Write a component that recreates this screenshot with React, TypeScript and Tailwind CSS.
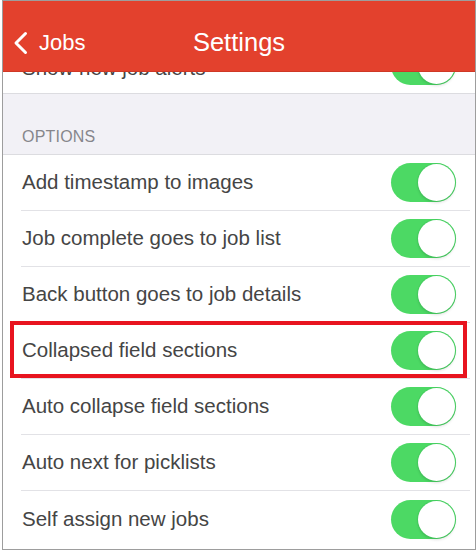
import React from 'react';

const options = [
  { label: 'Add timestamp to images' },
  { label: 'Job complete goes to job list' },
  { label: 'Back button goes to job details' },
  { label: 'Collapsed field sections', highlight: true },
  { label: 'Auto collapse field sections' },
  { label: 'Auto next for picklists' },
  { label: 'Self assign new jobs' },
];

const font = { fontFamily: '"Helvetica Neue", "Liberation Sans", Arial, sans-serif' };

function Toggle() {
  return (
    <div className="relative w-[65px] h-[39px] rounded-full bg-[#4cd964] shrink-0">
      <div className="absolute right-[1px] top-[1px] w-[37px] h-[37px] rounded-full bg-white shadow-[0_0_0_1px_rgba(60,190,90,0.35),0_2px_3px_rgba(0,0,0,0.12)]" />
    </div>
  );
}

function Row({ label, highlight, last }: { label: string; highlight?: boolean; last?: boolean }) {
  return (
    <div className="relative">
      <div className={`ml-[18px] mr-[5px] h-[56px] flex items-center justify-between pl-[1px] pr-[14px] ${last ? '' : 'border-b border-[#e2e2e6]'}`}>
        <span className="text-[20.5px] leading-none text-[#454545]">{label}</span>
        <Toggle />
      </div>
      {highlight && (
        <div className="absolute left-[7px] right-[8px] -top-[2px] bottom-[1px] border-[4px] border-[#e8141f] pointer-events-none" />
      )}
    </div>
  );
}

export default function App() {
  return (
    <div className="w-[476px] h-[554px] bg-white overflow-hidden" style={font}>
      <div className="relative ml-[2px] w-[474px] h-[550px] border-l border-r border-b border-t border-[#9d9d9d] overflow-hidden bg-white">
        {/* scrolled list, partly under the header */}
        <div className="pt-[36px]">
          <div className="h-[57px] flex items-center justify-between pl-[19px] pr-[19px] border-b border-[#dcdce0]">
            <span className="pt-[7px] text-[20.5px] leading-none text-[#454545]">Show new job alerts</span>
            <Toggle />
          </div>
          <div className="h-[61px] bg-[#f2f1f6] border-b border-[#dcdce0] flex items-end pl-[19px] pb-[9px]">
            <span className="text-[16px] leading-none text-[#86868b] tracking-[0.2px]">OPTIONS</span>
          </div>
          {options.map((o, i) => (
            <Row key={o.label} label={o.label} highlight={o.highlight} last={i === options.length - 1} />
          ))}
        </div>

        <div className="absolute top-0 inset-x-0 h-[71px] bg-[#e3412d] border-b border-[#cf3826]">
          <div className="relative mt-[19px] h-[46px] flex items-center">
            <div className="flex items-center ml-[10px] text-white">
              <svg width="15" height="24" viewBox="0 0 15 24" fill="none">
                <polyline points="12.5,2.5 3,12 12.5,21.5" stroke="white" strokeWidth="3" strokeLinecap="round" strokeLinejoin="round" />
              </svg>
              <span className="ml-[11px] text-[22px] leading-none">Jobs</span>
            </div>
            <div className="absolute inset-0 flex items-center justify-center text-white text-[25.5px] leading-none">
              Settings
            </div>
          </div>
        </div>
      </div>
    </div>
  );
}
